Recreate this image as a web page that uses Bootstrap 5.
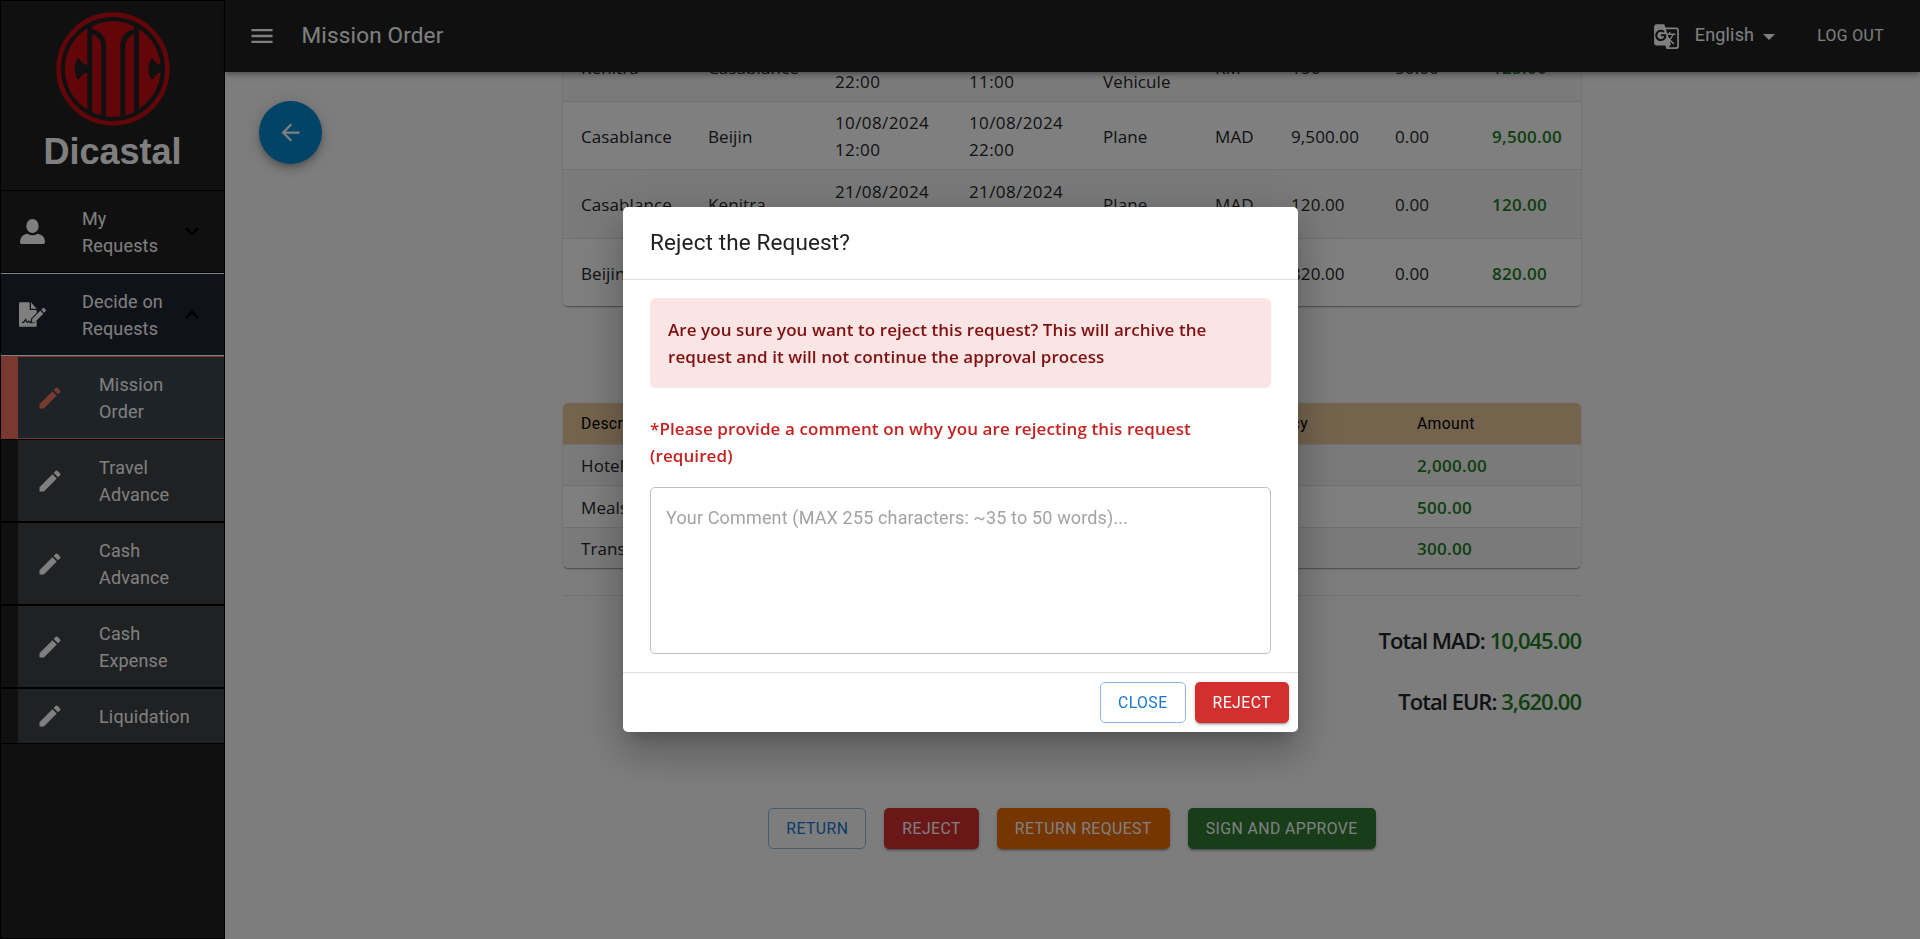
<!DOCTYPE html>
<html lang="en">
<head>
<meta charset="utf-8">
<meta name="viewport" content="width=device-width, initial-scale=1">
<title>Mission Order</title>
<link href="https://cdn.jsdelivr.net/npm/bootstrap@5.3.0/dist/css/bootstrap.min.css" rel="stylesheet">
<style>
  html { font-size: 18px; }
  body { font-family: Roboto, sans-serif; background: #fafafa; color: #212529; height: 100vh; overflow: hidden; }

  /* sidebar */
  .side-nav { width: 225px; background: #212121; border: 1px solid #000; border-top: 0; color: #fff; }
  .brand-box { height: 190px; border-top: 1px solid #000; }
  .brand-box svg { width: 114px; height: 114px; margin-top: 11px; }
  .brand-name { font: bold 36px/41px "Liberation Sans", sans-serif; margin-top: 5px; }
  .nav-entry { border: solid #000; border-width: 1px 0; height: 83px; font-size: 18px; line-height: 27px; letter-spacing: .16px; }
  .nav-entry.short { height: 56px; }
  .nav-entry .glyph { width: 81px; padding-left: 18px; }
  .nav-entry .caret { width: 14px; margin-left: auto; margin-right: 25px; }
  .nav-entry.opened { background: #1e2530; border-color: #fff; }
  .nav-entry.opened .glyph { padding-left: 17px; }
  .nav-entry.sub .inner { background: #3e4244; margin-left: 17px; }
  .nav-entry.sub .glyph { padding-left: 17.5px; }
  .nav-entry.current { background: #f27262; border-color: #f27262; }
  .nav-entry.current .inner { background: #3c464e; }
  .nav-entry.current .glyph { color: #f27262; }

  /* top bar */
  .top-bar { height: 72px; background: #212121; color: #fff; z-index: 5;
    box-shadow: 0 2px 4px -1px rgba(0,0,0,.2), 0 4px 5px rgba(0,0,0,.14), 0 1px 10px rgba(0,0,0,.12); }
  .menu-glyph { margin-left: 22.5px; }
  .bar-title { font-size: 22.5px; font-weight: 400; letter-spacing: .17px; margin: -2px 0 0 26px; line-height: 36px; }
  .lang-label { font-size: 18px; margin-left: 15px; letter-spacing: .15px; line-height: 27px; margin-top: -3px; }
  .lang-caret { margin-left: 9px; margin-top: 2px; }
  .logout-label { font-size: 15.75px; margin-left: 42px; margin-right: 36px; letter-spacing: .42px; line-height: 27px; margin-top: -2px; }
  .fab-back { width: 63px; height: 63px; top: 101px; left: 34px; background: #0288d1; color: #fff;
    box-shadow: 0 3px 5px -1px rgba(0,0,0,.2), 0 6px 10px rgba(0,0,0,.14), 0 1px 18px rgba(0,0,0,.12); }

  /* content */
  .page-col { width: 1018px; margin: -39px auto 0; position: relative; left: -.5px; }
  .sheet { background: #fff; border-radius: 5px; overflow: hidden;
    box-shadow: 0 2px 1px -1px rgba(0,0,0,.2), 0 1px 1px rgba(0,0,0,.14), 0 1px 3px rgba(0,0,0,.12); }
  .sheet table { table-layout: fixed; font: 17px/27px "Open Sans", sans-serif; margin: 0; }
  .sheet td, .sheet th { padding: 6.75px 0 6.75px 18px !important; border-bottom: 1px solid #e0e0e0; vertical-align: middle; }
  .sheet td { padding-top: 7.5px !important; padding-bottom: 6px !important; letter-spacing: .1px; }
  .sheet td.when { letter-spacing: .4px; }
  .sheet tr:last-child td { border-bottom: 0; }
  .sheet td { color: #212529; background: #fff; }
  .sheet tbody tr:nth-child(odd) td { background: #f5f5f5; }
  .sheet td.money { color: #1b7e20; font-weight: 600; letter-spacing: .3px; }
  .sheet th { background: #e8c99b; color: #000; font: 400 15.75px/27px Roboto, sans-serif; letter-spacing: .35px; }
  .sum-line { font: 600 22px/27px "Open Sans", sans-serif; letter-spacing: -.97px; }
  .sum-line span { color: #1b7e20; }

  /* buttons */
  .act { font: 400 15.75px/27.5px Roboto, sans-serif; letter-spacing: .45px; padding: 6.75px 18px; border: 0; border-radius: 5px; color: #fff; height: 41px; white-space: nowrap;
    box-shadow: 0 3px 1px -2px rgba(0,0,0,.2), 0 2px 2px rgba(0,0,0,.14), 0 1px 5px rgba(0,0,0,.12); }
  .act.hollow { color: #1976d2; border: 1px solid #8cbae8; padding: 5.75px 17px; box-shadow: none; }
  .red { background: #d32f2f; } .orange { background: #ed6c02; } .green { background: #2e7d32; }

  /* dialog */
  .modal-dialog { width: 675px; max-width: 675px; margin: 207px auto 0 623px; }
  .modal-content { border: 0; border-radius: 5px; height: 525px;
    box-shadow: 0 11px 15px -7px rgba(0,0,0,.2), 0 24px 38px 3px rgba(0,0,0,.14), 0 9px 46px 8px rgba(0,0,0,.12); }
  .modal-header { height: 73px; padding: 0 27px; border-color: #e0e0e0; }
  .modal-title { font-size: 22.5px; line-height: 36px; font-weight: 400; letter-spacing: .13px; color: #212121; margin-top: -2px; }
  .modal-body { padding: 18px 27px; font: 600 17px/27px "Open Sans", sans-serif; }
  .warn-box { background: #fbe4e4; color: #7f1012; border-radius: 6px; padding: 18px; height: 90px; letter-spacing: .07px; }
  .ask { color: #c62222; margin: 27px 0 18px; letter-spacing: .09px; }
  .modal-body textarea { height: 167px; resize: none; border: 1px solid #c0c0c0; border-radius: 5px; padding: 16px 15px; font: 18px/27px Roboto, sans-serif; letter-spacing: .15px; }
  .modal-body textarea::placeholder { color: #a3a3a3; }
  .modal-footer { padding: 9px; gap: 9px; border-color: #e0e0e0; }
  .modal-footer > * { margin: 0; }
</style>
</head>
<body class="d-flex">

<svg class="d-none">
  <symbol id="pencil" viewBox="0 0 24 24"><path fill="currentColor" d="M3 17.25V21h3.75L17.81 9.94l-3.75-3.75L3 17.25zM20.71 7.04c.39-.39.39-1.02 0-1.41l-2.34-2.34a.996.996 0 0 0-1.41 0l-1.83 1.83 3.75 3.75 1.83-1.83z"/></symbol>
</svg>

<aside class="side-nav vh-100 flex-shrink-0 d-flex flex-column">
  <div class="brand-box d-flex flex-column align-items-center">
    <svg viewBox="167 35 342 342" fill="#c60c14">
      <circle cx="338" cy="206" r="163" fill="none" stroke="#c60c14" stroke-width="14"/>
      <path d="M261 84A144 144 0 0 0 261 328V217Q246 219 239 234Q233 241 229 232Q217 206 229 180Q233 170 238 177Q246 191 261 194Z"/>
      <path d="M416 86A144 144 0 0 1 481 194Q466 191 459 177Q454 170 450 180Q438 206 450 232Q454 241 460 234Q467 219 481 217A144 144 0 0 1 416 325Z"/>
      <path d="M276 78Q338 48 401 78V87Q360 97 360 138V348Q338 351 317 348V138Q317 97 276 87Z"/>
      <path d="M276 102Q303 112 303 140V345L276 336Z"/>
      <path d="M401 102Q375 112 375 140V345L401 336Z"/>
    </svg>
    <div class="brand-name">Dicastal</div>
  </div>

  <div class="nav-entry d-flex align-items-center">
    <div class="glyph"><svg class="d-block" width="27" height="27" viewBox="57 654 81 81" fill="#fff"><ellipse cx="97.5" cy="678" rx="18.5" ry="21"/><path d="M60 727Q60 704 82 701Q97 710 113 701Q135 704 135 727Q135 732 130 732H65Q60 732 60 727Z"/></svg></div>
    <div>My<br>Requests</div>
    <svg class="caret" height="9" viewBox="0 0 14 9" fill="none" stroke="#000" stroke-width="2.4"><path d="M1 1.2 7 7.2 13 1.2"/></svg>
  </div>
  <div class="nav-entry opened d-flex align-items-center">
    <div class="glyph"><svg class="d-block" width="28" height="27" viewBox="54 123 84 81" fill="#fff"><path d="M60 127H89V150H110V159L94 175L91 186L86 181L82 185L77 175L70 185H66V189H72L77 182L81 190L87 187L90 190H100L110 182V197Q110 200 107 200H60Q57 200 57 197V130Q57 127 60 127Z"/><path d="M93 127 110 146H93Z"/><path d="M97 176 121 152 130 161 106 185 95 188Z"/><path d="M124 149 129 144Q131 143 133 145L137 149Q139 151 137 153L132 158Z"/></svg></div>
    <div>Decide on<br>Requests</div>
    <svg class="caret" height="9" viewBox="0 0 14 9" fill="none" stroke="#000" stroke-width="2.4"><path d="M1 7.8 7 1.8 13 7.8"/></svg>
  </div>
  <div class="nav-entry sub current d-flex"><div class="inner d-flex align-items-center flex-grow-1"><div class="glyph"><svg class="d-block" width="28" height="28"><use href="#pencil"/></svg></div><div>Mission<br>Order</div></div></div>
  <div class="nav-entry sub d-flex"><div class="inner d-flex align-items-center flex-grow-1"><div class="glyph"><svg class="d-block" width="28" height="28"><use href="#pencil"/></svg></div><div>Travel<br>Advance</div></div></div>
  <div class="nav-entry sub d-flex"><div class="inner d-flex align-items-center flex-grow-1"><div class="glyph"><svg class="d-block" width="28" height="28"><use href="#pencil"/></svg></div><div>Cash<br>Advance</div></div></div>
  <div class="nav-entry sub d-flex"><div class="inner d-flex align-items-center flex-grow-1"><div class="glyph"><svg class="d-block" width="28" height="28"><use href="#pencil"/></svg></div><div>Cash<br>Expense</div></div></div>
  <div class="nav-entry sub short d-flex"><div class="inner d-flex align-items-center flex-grow-1"><div class="glyph"><svg class="d-block" width="28" height="28"><use href="#pencil"/></svg></div><div>Liquidation</div></div></div>
</aside>

<div class="flex-grow-1 d-flex flex-column vh-100 position-relative">
  <header class="top-bar d-flex align-items-center position-relative flex-shrink-0">
    <svg class="menu-glyph" width="28" height="28" viewBox="0 0 24 24" fill="#fff"><path d="M3 18h18v-2H3v2zm0-5h18v-2H3v2zm0-7v2h18V6H3z"/></svg>
    <div class="bar-title">Mission Order</div>
    <div class="ms-auto d-flex align-items-center">
      <svg width="27" height="27" viewBox="0 0 24 24" fill="#fff"><path d="M21 4H11l-1-3H3c-1.1 0-2 .9-2 2v15c0 1.1.9 2 2 2h8l1 3h9c1.1 0 2-.9 2-2V6c0-1.1-.9-2-2-2zM7 16c-2.76 0-5-2.24-5-5s2.24-5 5-5c1.35 0 2.48.5 3.35 1.3L9.03 8.57c-.38-.36-1.04-.78-2.03-.78-1.74 0-3.15 1.44-3.15 3.21S5.26 14.21 7 14.21c2.01 0 2.84-1.44 2.92-2.41H7v-1.71h4.68c.07.31.12.61.12 1.02C11.8 13.97 9.89 16 7 16zm6.17-5.42h3.7c-.43 1.25-1.11 2.43-2.05 3.47-.31-.35-.6-.72-.86-1.1l-.79-2.37zm8.33 9.92c0 .55-.45 1-1 1H14l2-2.5-1.04-3.1 3.1 3.1.92-.92-3.3-3.25.02-.02c1.13-1.25 1.93-2.69 2.4-4.22H20v-1.3h-4.53V8h-1.29v1.29h-1.44L11.46 5.5h9.04c.55 0 1 .45 1 1v14z"/></svg>
      <span class="lang-label">English</span>
      <svg class="lang-caret" width="12" height="6" viewBox="0 0 12 6" fill="#fff"><path d="M0 0H12L6 6Z"/></svg>
      <span class="logout-label">LOG OUT</span>
    </div>
  </header>

  <button class="fab-back btn rounded-circle position-absolute p-0 border-0 d-flex align-items-center justify-content-center">
    <svg width="27" height="27" viewBox="0 0 24 24" fill="#fff"><path d="M20 11H7.83l5.59-5.59L12 4l-8 8 8 8 1.41-1.41L7.83 13H20v-2z"/></svg>
  </button>

  <main class="flex-grow-1 overflow-hidden">
    <div class="page-col">
      <div class="sheet">
        <table class="table">
          <colgroup><col style="width:127px"><col style="width:127px"><col style="width:134px"><col style="width:134px"><col style="width:112px"><col style="width:76px"><col style="width:104px"><col style="width:97px"><col></colgroup>
          <tbody>
            <tr><td>Kenitra</td><td>Casablance</td><td class="when">09/08/2024<br>22:00</td><td class="when">10/08/2024<br>11:00</td><td>Personal<br>Vehicule</td><td>KM</td><td>150</td><td>50.00</td><td class="money">125.00</td></tr>
            <tr><td>Casablance</td><td>Beijin</td><td class="when">10/08/2024<br>12:00</td><td class="when">10/08/2024<br>22:00</td><td>Plane</td><td>MAD</td><td>9,500.00</td><td>0.00</td><td class="money">9,500.00</td></tr>
            <tr><td>Casablance</td><td>Kenitra</td><td class="when">21/08/2024<br>12:00</td><td class="when">21/08/2024<br>22:00</td><td>Plane</td><td>MAD</td><td>120.00</td><td>0.00</td><td class="money">120.00</td></tr>
            <tr><td>Beijin</td><td>Casablance</td><td class="when">22/08/2024<br>12:00</td><td class="when">22/08/2024<br>22:00</td><td>Plane</td><td>EUR</td><td>820.00</td><td>0.00</td><td class="money">820.00</td></tr>
          </tbody>
        </table>
      </div>

      <div class="sheet" style="margin-top:97px">
        <table class="table">
          <colgroup><col style="width:662px"><col style="width:174px"><col></colgroup>
          <thead><tr><th>Description</th><th>Currency</th><th>Amount</th></tr></thead>
          <tbody>
            <tr><td>Hotel</td><td>EUR</td><td class="money">2,000.00</td></tr>
            <tr><td>Meals</td><td>EUR</td><td class="money">500.00</td></tr>
            <tr><td>Transport</td><td>EUR</td><td class="money">300.00</td></tr>
          </tbody>
        </table>
      </div>

      <div class="border-top text-end" style="margin-top:27px;padding-top:31px">
        <div class="sum-line">Total MAD: <span>10,045.00</span></div>
        <div class="sum-line" style="margin-top:34px">Total EUR: <span>3,620.00</span></div>
      </div>

      <div class="d-flex justify-content-center gap-3" style="margin-top:93px">
        <button class="btn act hollow">RETURN</button>
        <button class="btn act red">REJECT</button>
        <button class="btn act orange">RETURN REQUEST</button>
        <button class="btn act green">SIGN AND APPROVE</button>
      </div>
    </div>
  </main>
</div>

<div class="modal-backdrop show"></div>
<div class="modal d-block overflow-hidden" tabindex="-1" role="dialog">
  <div class="modal-dialog">
    <div class="modal-content">
      <div class="modal-header"><h5 class="modal-title">Reject the Request?</h5></div>
      <div class="modal-body">
        <div class="warn-box">Are you sure you want to reject this request? This will archive the<br>request and it will not continue the approval process</div>
        <div class="ask">*Please provide a comment on why you are rejecting this request<br>(required)</div>
        <textarea class="w-100 d-block" placeholder="Your Comment (MAX 255 characters: ~35 to 50 words)..."></textarea>
      </div>
      <div class="modal-footer">
        <button class="btn act hollow">CLOSE</button>
        <button class="btn act red">REJECT</button>
      </div>
    </div>
  </div>
</div>

<script src="https://cdn.jsdelivr.net/npm/bootstrap@5.3.0/dist/js/bootstrap.bundle.min.js"></script>
</body>
</html>
